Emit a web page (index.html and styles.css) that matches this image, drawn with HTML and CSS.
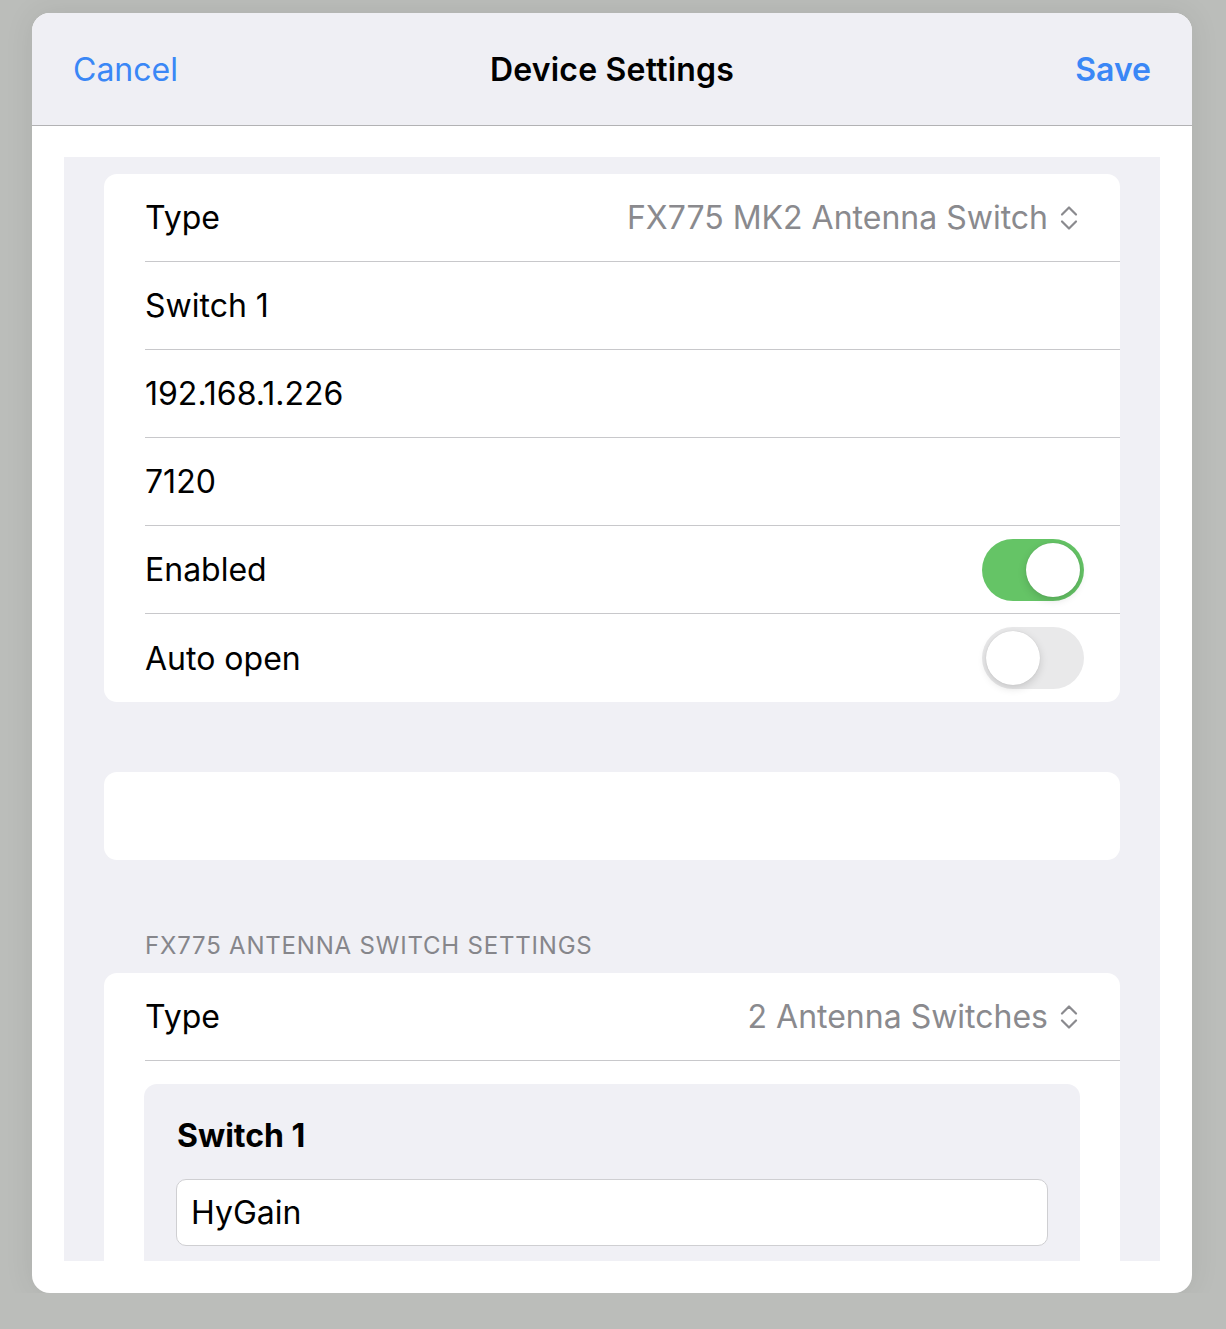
FILE: index.html
```html
<!DOCTYPE html>
<html lang="en">
<head>
    <meta charset="UTF-8">
    <meta name="viewport" content="width=device-width, initial-scale=1.0">
    <title>Device Settings</title>
    <link rel="stylesheet" href="styles.css">
</head>
<body>

<div class="sheet">
    <!-- Navigation header -->
    <header class="nav-bar">
        <a class="nav-btn" href="#">Cancel</a>
        <h1 class="nav-title">Device Settings</h1>
        <a class="nav-btn save" href="#">Save</a>
    </header>

    <div class="sheet-body">
        <div class="form-panel">

            <div class="group">
                <div class="row">
                    <span class="label">Type</span>
                    <span class="picker">FX775 MK2 Antenna Switch
                        <svg class="updown" width="18" height="28" viewBox="0 0 18 28"><path d="M2 10.5 L9 3.5 L16 10.5 M2 17.5 L9 24.5 L16 17.5" fill="none" stroke="#8a8a8e" stroke-width="2.2" stroke-linecap="round" stroke-linejoin="round"/></svg>
                    </span>
                </div>
                <div class="row"><span class="label">Switch 1</span></div>
                <div class="row"><span class="label">192.168.1.226</span></div>
                <div class="row"><span class="label">7120</span></div>
                <div class="row">
                    <span class="label">Enabled</span>
                    <span class="toggle on"><span class="knob"></span></span>
                </div>
                <div class="row">
                    <span class="label">Auto open</span>
                    <span class="toggle"><span class="knob"></span></span>
                </div>
            </div>

            <div class="group empty"></div>

            <div class="section-title">FX775 Antenna Switch Settings</div>

            <div class="group">
                <div class="row">
                    <span class="label">Type</span>
                    <span class="picker">2 Antenna Switches
                        <svg class="updown" width="18" height="28" viewBox="0 0 18 28"><path d="M2 10.5 L9 3.5 L16 10.5 M2 17.5 L9 24.5 L16 17.5" fill="none" stroke="#8a8a8e" stroke-width="2.2" stroke-linecap="round" stroke-linejoin="round"/></svg>
                    </span>
                </div>
                <div class="sub-box">
                    <h3>Switch 1</h3>
                    <div class="text-field">HyGain</div>
                </div>
            </div>

        </div>
    </div>
</div>

</body>
</html>
```

FILE: styles.css
```css
/* General styles */
body {
    font-family: Inter, "Noto Sans", sans-serif;
    background-color: #bbbdba;
    margin: 0;
    padding: 0;
}

/* Modal sheet */
.sheet {
    width: 1160px;
    height: 1280px;
    margin: 13px 0 0 32px;
    background-color: #fff;
    border-radius: 18px;
    overflow: hidden;
    box-shadow: 0 0 30px rgba(0, 0, 0, 0.08);
    display: flex;
    flex-direction: column;
}

/* Navigation bar */
.nav-bar {
    height: 112px;
    background-color: #efeff4;
    border-bottom: 1px solid #b2b2b4;
    display: flex;
    align-items: center;
    justify-content: space-between;
    padding: 0 41px;
    position: relative;
    flex-shrink: 0;
}

.nav-btn {
    color: #3a87f6;
    text-decoration: none;
    font-size: 32px;
}

.nav-btn.save {
    font-weight: 600;
}

.nav-title {
    position: absolute;
    left: 0;
    right: 0;
    margin: 0;
    text-align: center;
    font-size: 32px;
    font-weight: 600;
    letter-spacing: 0.2px;
    pointer-events: none;
}

/* Body */
.sheet-body {
    flex: 1;
    padding: 31px 32px 32px;
    display: flex;
    min-height: 0;
}

.form-panel {
    flex: 1;
    background-color: #f0f0f5;
    padding: 17px 40px 0;
    overflow: hidden;
}

/* Grouped list */
.group {
    background-color: #fff;
    border-radius: 13px;
    overflow: hidden;
    margin-bottom: 70px;
}

.group.empty {
    height: 88px;
    margin-bottom: 0;
}

.row {
    height: 88px;
    margin-left: 41px;
    padding-right: 36px;
    border-bottom: 1px solid #c8c8cb;
    box-sizing: border-box;
    display: flex;
    align-items: center;
    justify-content: space-between;
}

.group > .row:last-of-type {
    border-bottom: none;
}

.group .row:first-child + .sub-box {
    margin-top: 23px;
}

.label {
    font-size: 32px;
    color: #000;
}

.picker {
    font-size: 32px;
    color: #8a8a8e;
    display: flex;
    align-items: center;
    gap: 12px;
    margin-right: 6px;
}

/* Section header */
.section-title {
    text-transform: uppercase;
    font-size: 24px;
    color: #86868b;
    padding: 71px 0 13px 41px;
    letter-spacing: 0.8px;
}

/* Switch toggles */
.toggle {
    width: 102px;
    height: 62px;
    border-radius: 31px;
    background-color: #e9e9ea;
    position: relative;
    box-sizing: border-box;
}

.toggle .knob {
    position: absolute;
    top: 4px;
    left: 4px;
    width: 54px;
    height: 54px;
    border-radius: 50%;
    background-color: #fff;
    box-shadow: 0 3px 8px rgba(0, 0, 0, 0.15), 0 0 1px rgba(0, 0, 0, 0.15);
}

.toggle.on {
    background-color: #65c466;
}

.toggle.on .knob {
    left: 44px;
}

/* Nested box */
.sub-box {
    margin: 0 40px;
    background-color: #f0f0f5;
    border-radius: 13px 13px 0 0;
    padding: 32px 32px 40px;
}

.sub-box h3 {
    margin: 0 0 24px 1px;
    font-size: 32px;
    font-weight: 700;
}

.text-field {
    background-color: #fff;
    border: 1px solid #cfcfd2;
    border-radius: 10px;
    height: 67px;
    box-sizing: border-box;
    padding: 0 14px;
    display: flex;
    align-items: center;
    font-size: 32px;
}
```
